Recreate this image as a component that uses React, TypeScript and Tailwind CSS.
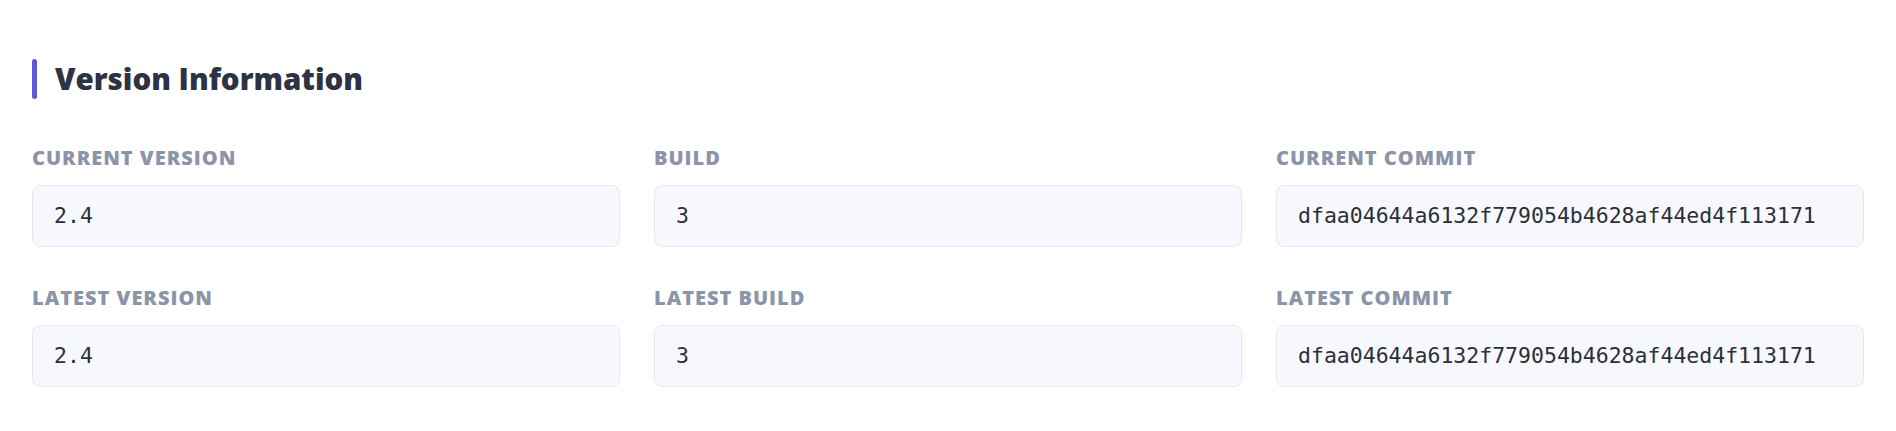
import React from 'react';

const FIELDS = [
  { label: 'Current Version', value: '2.4' },
  { label: 'Build', value: '3' },
  { label: 'Current Commit', value: 'dfaa04644a6132f779054b4628af44ed4f113171' },
  { label: 'Latest Version', value: '2.4' },
  { label: 'Latest Build', value: '3' },
  { label: 'Latest Commit', value: 'dfaa04644a6132f779054b4628af44ed4f113171' },
];

export default function App() {
  return (
    <div className="min-h-[431px] bg-white px-8 pt-[59px] font-['Open_Sans',sans-serif]">
      <div className="flex items-center gap-[18px] mb-[47px]">
        <div className="w-[5px] h-10 rounded-full bg-[#5a5bd5]" />
        <h2 className="text-[29.5px] leading-10 font-extrabold text-[#2d3342]">Version Information</h2>
      </div>

      <div className="grid grid-cols-3 gap-x-[34px] gap-y-[39px]">
        {FIELDS.map((f, idx) => (
          <div key={idx}>
            <div className="text-[20px] leading-6 font-extrabold uppercase tracking-wider text-[#8b94a8] mb-[15px]">
              {f.label}
            </div>
            <div className="h-[62px] flex items-center px-[21px] rounded-lg border border-[#e6e8f8] bg-[#f7f8fd] font-['DejaVu_Sans_Mono',monospace] text-[21.5px] text-[#2b303b]">
              {f.value}
            </div>
          </div>
        ))}
      </div>
    </div>
  );
}
